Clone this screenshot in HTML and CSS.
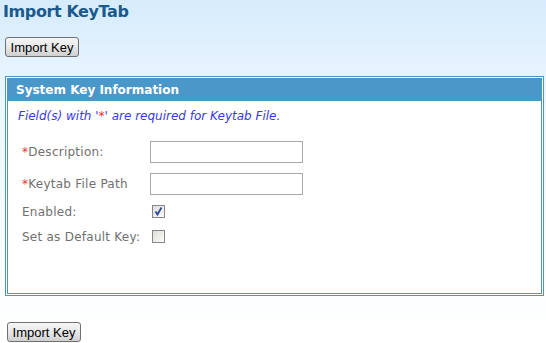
FILE: index.html
```html
<!DOCTYPE html>
<html lang="en">
<head>
    <meta charset="UTF-8">
    <title>Import KeyTab</title>
    <link rel="stylesheet" href="styles.css">
</head>
<body>
    <h1 class="page-title">Import KeyTab</h1>
    <div class="top-actions">
        <button type="button" class="btn">Import Key</button>
    </div>

    <div class="panel">
        <div class="panel-head">System Key Information</div>
        <p class="note">Field(s) with '<span class="req">*</span>' are required for Keytab File.</p>
        <form class="key-form">
            <div class="row text-row">
                <label class="field-label" for="desc"><span class="req">*</span>Description:</label>
                <input type="text" id="desc" class="field-input">
            </div>
            <div class="row text-row">
                <label class="field-label" for="path"><span class="req">*</span>Keytab File Path</label>
                <input type="text" id="path" class="field-input">
            </div>
            <div class="row check-row">
                <span class="field-label">Enabled:</span>
                <span class="check">
                    <svg width="11" height="11" viewBox="0 0 11 11"><path d="M2.5 5.5 L4.5 8.5 L8.5 1.5" fill="none" stroke="#2c4a9c" stroke-width="1.8"/></svg>
                </span>
            </div>
            <div class="row check-row">
                <span class="field-label">Set as Default Key:</span>
                <span class="check"></span>
            </div>
        </form>
    </div>

    <div class="bottom-actions">
        <button type="button" class="btn">Import Key</button>
    </div>
</body>
</html>
```

FILE: styles.css
```css
body {
    margin: 0;
    padding: 0 2px 0 5px;
    height: 343px;
    box-sizing: border-box;
    font-family: "DejaVu Sans", Verdana, sans-serif;
    font-size: 12px;
    background: linear-gradient(#d6ebfc 0px, #eaf6fe 90px, #ffffff 330px);
}
.page-title {
    margin: 0 0 0 -2px;
    padding-top: 2px;
    font-size: 16px;
    letter-spacing: -0.4px;
    line-height: 20px;
    font-weight: bold;
    color: #1b5a8c;
}
.top-actions {
    margin-top: 15px;
    height: 20px;
}
.bottom-actions {
    margin-top: 26px;
    padding-left: 2px;
}
.btn {
    display: block;
    width: 74px;
    height: 20px;
    padding: 0;
    font-family: "Liberation Sans", Arial, sans-serif;
    font-size: 13px;
    color: #000;
    background: linear-gradient(#f6f6f6, #e4e4e4 60%, #cfcfcf);
    border: 1px solid #707070;
    border-radius: 3px;
}
.panel {
    margin-top: 19px;
    height: 220px;
    box-sizing: border-box;
    border: 3px double #4a98c9;
    background: #fff;
}
.panel-head {
    height: 22px;
    line-height: 22px;
    padding-left: 8px;
    background: #4a98c9;
    color: #fff;
    font-weight: bold;
}
.note {
    margin: 8px 0 0 10px;
    line-height: 15px;
    font-style: italic;
    color: #3838f0;
}
.req {
    color: #f03030;
}
.key-form {
    margin-top: 17px;
    padding-left: 14px;
}
.row {
    display: flex;
    align-items: center;
}
.text-row {
    height: 22px;
    margin-bottom: 10px;
}
.check-row {
    height: 13px;
    margin-bottom: 12px;
}
.text-row + .check-row {
    margin-top: 1px;
}
.field-label {
    width: 128px;
    flex: none;
    color: #707070;
    letter-spacing: 0.25px;
    white-space: nowrap;
}
.field-input {
    width: 153px;
    height: 22px;
    box-sizing: border-box;
    margin: 0;
    border: 1px solid #a9a9a9;
    padding: 2px 3px;
}
.check {
    width: 13px;
    height: 13px;
    box-sizing: border-box;
    margin-left: 2px;
    border: 1px solid #878787;
    background: linear-gradient(135deg, #dcdcd7, #fbfbf9);
    display: flex;
    align-items: center;
    justify-content: center;
}
```
